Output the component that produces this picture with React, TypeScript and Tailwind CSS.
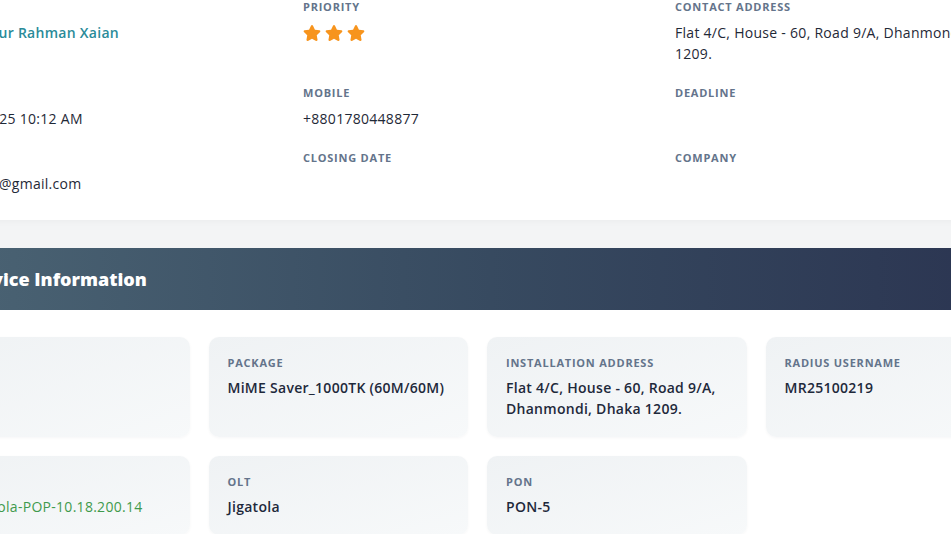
import React from "react";
import { FaStar } from "react-icons/fa";

interface Field {
  label: string;
  value?: React.ReactNode;
}

const topRows: Field[][] = [
  [
    { label: "Name", value: <span className="font-semibold text-[#2a8b99]">Md Habibur Rahman Xaian</span> },
    {
      label: "Priority",
      value: (
        <span className="flex items-center gap-[4px] pt-[2px] text-[#f7941d]">
          <FaStar size={18} />
          <FaStar size={18} />
          <FaStar size={18} />
        </span>
      ),
    },
    { label: "Contact Address", value: "Flat 4/C, House - 60, Road 9/A, Dhanmondi, Dhaka 1209." },
  ],
  [
    { label: "Created", value: "Oct 02, 2025 10:12 AM" },
    { label: "Mobile", value: "+8801780448877" },
    { label: "Deadline" },
  ],
  [
    { label: "Email", value: "mizanur.7@gmail.com" },
    { label: "Closing Date" },
    { label: "Company" },
  ],
];

const cards: Field[] = [
  { label: "Zone", value: "2191" },
  { label: "Package", value: "MiME Saver_1000TK (60M/60M)" },
  { label: "Installation Address", value: "Flat 4/C, House - 60, Road 9/A, Dhanmondi, Dhaka 1209." },
  { label: "Radius Username", value: "MR25100219" },
  {
    label: "POP",
    value: <span className="font-normal text-[#3f9a4c]">JG-Jigatola-POP-10.18.200.14</span>,
  },
  { label: "OLT", value: "Jigatola" },
  { label: "PON", value: "PON-5" },
];

function TopCell({ label, value }: Field) {
  return (
    <div className="flex flex-col">
      <div className="text-[11px] leading-4 font-bold uppercase tracking-[0.07em] text-[#64748b]">
        {label}
      </div>
      <div className="mt-[7px] min-h-[21px] pr-6 text-sm leading-[21px] tracking-[0.02em] text-[#1f2937]">
        {value}
      </div>
    </div>
  );
}

function InfoCard({ label, value }: Field) {
  return (
    <div className="rounded-[10px] bg-gradient-to-br from-[#eff2f4] to-[#f7f9fa] px-[19px] pt-[18px] pb-[18px] shadow-[0_1px_3px_rgba(15,23,42,0.04)]">
      <div className="text-[11px] leading-4 font-bold uppercase tracking-[0.07em] text-[#64748b]">
        {label}
      </div>
      <div className="mt-1.5 text-sm leading-[21px] font-semibold tracking-[0.02em] text-[#1e293b]">
        {value}
      </div>
    </div>
  );
}

export default function App() {
  return (
    <div className="h-[534px] w-[951px] overflow-hidden bg-[#f3f4f5] font-['Open_Sans',sans-serif]">
      <div className="-ml-[70px] w-[1120px]">
        <div className="bg-white pb-[26px] pl-px shadow-[0_2px_6px_rgba(0,0,0,0.03)]">
          <div className="-mt-px grid grid-cols-[repeat(3,372px)] gap-y-[21px]">
            {topRows.flat().map((f) => (
              <TopCell key={f.label} {...f} />
            ))}
          </div>
        </div>

        <div className="mt-[28px] bg-white">
          <div className="flex h-[62px] items-center bg-gradient-to-r from-[#4b6474] via-[#374a60] to-[#2a3350] pl-[32px]">
            <h2 className="text-lg font-extrabold text-white">Service Information</h2>
          </div>
          <div className="grid grid-cols-[repeat(4,259.5px)] gap-[19px] pt-[27px] pb-8">
            {cards.map((c) => (
              <InfoCard key={c.label} {...c} />
            ))}
          </div>
        </div>
      </div>
    </div>
  );
}
